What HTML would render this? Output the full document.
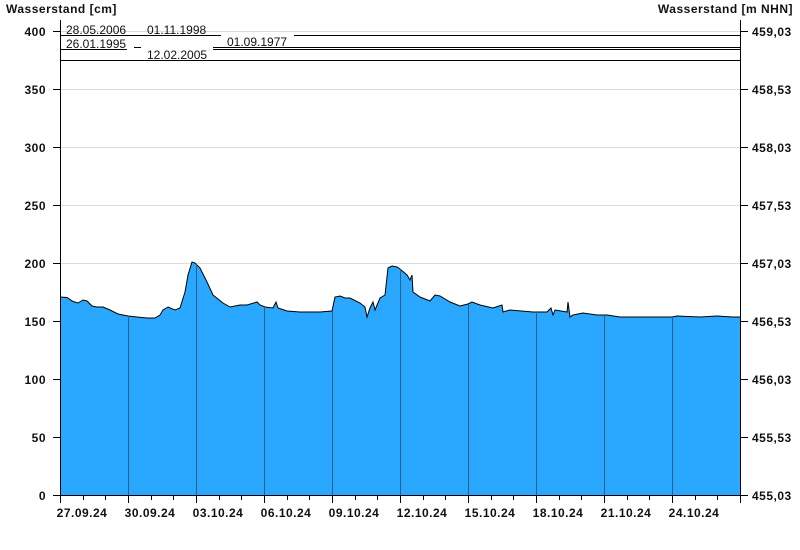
<!DOCTYPE html>
<html><head><meta charset="utf-8"><style>
html,body{margin:0;padding:0;background:#fff;width:800px;height:550px;overflow:hidden}
svg{display:block;font-family:"Liberation Sans",Arial,sans-serif}
.b{font-weight:bold;font-size:12px;fill:#111;letter-spacing:0.5px}
.n{font-size:12px;fill:#111}
</style></head><body>
<svg width="800" height="550" viewBox="0 0 800 550">
<g stroke="#dcdcdc" stroke-width="1">
<line x1="60" y1="437.5" x2="740" y2="437.5"/>
<line x1="60" y1="379.5" x2="740" y2="379.5"/>
<line x1="60" y1="321.5" x2="740" y2="321.5"/>
<line x1="60" y1="263.5" x2="740" y2="263.5"/>
<line x1="60" y1="205.5" x2="740" y2="205.5"/>
<line x1="60" y1="147.5" x2="740" y2="147.5"/>
<line x1="60" y1="89.5" x2="740" y2="89.5"/>
<line x1="60" y1="31.5" x2="740" y2="31.5"/>
</g>
<polygon fill="#2aa8ff" stroke="none" points="60,495 60,297 67,297.5 73,301.5 78,303 83,300 87,301 92,306 97,307 103,307 110,310 118,314 128,316 137,317 147,318 155,318 160,315 163,310 168,307 175,310 180,308 185,292 188,275 192,262 195,263 200,268 207,282 213,295 223,303 230,307 240,305 247,305 257,302 260,305 265,307 273,308 276,302 278,308 287,311 300,312 320,312 332,311 335,297 340,296 345,298 350,298 360,303 365,307 367,317 370,308 373,302 375,310 380,298 385,295 388,268 392,266 397,267 400,269 407,275 410,280 412,275 413,292 420,297 430,301 435,295 440,296 450,302 460,306 468,304 472,302 480,305 493,308 502,305 503,312 510,310 533,312 547,312 551,308 553,315 555,310 567,312 568,302 570,317 573,315 583,313 597,315 607,315 620,317 640,317 672,317 677,316 700,317 717,316 733,317 740,317 740,495"/>
<polyline fill="none" stroke="#000" stroke-width="1" points="60,297 67,297.5 73,301.5 78,303 83,300 87,301 92,306 97,307 103,307 110,310 118,314 128,316 137,317 147,318 155,318 160,315 163,310 168,307 175,310 180,308 185,292 188,275 192,262 195,263 200,268 207,282 213,295 223,303 230,307 240,305 247,305 257,302 260,305 265,307 273,308 276,302 278,308 287,311 300,312 320,312 332,311 335,297 340,296 345,298 350,298 360,303 365,307 367,317 370,308 373,302 375,310 380,298 385,295 388,268 392,266 397,267 400,269 407,275 410,280 412,275 413,292 420,297 430,301 435,295 440,296 450,302 460,306 468,304 472,302 480,305 493,308 502,305 503,312 510,310 533,312 547,312 551,308 553,315 555,310 567,312 568,302 570,317 573,315 583,313 597,315 607,315 620,317 640,317 672,317 677,316 700,317 717,316 733,317 740,317"/>
<g stroke="#2a5f88" stroke-width="1">
<line x1="128.5" y1="316" x2="128.5" y2="495"/>
<line x1="196.5" y1="264" x2="196.5" y2="495"/>
<line x1="264.5" y1="307" x2="264.5" y2="495"/>
<line x1="332.5" y1="311" x2="332.5" y2="495"/>
<line x1="400.5" y1="269" x2="400.5" y2="495"/>
<line x1="468.5" y1="304" x2="468.5" y2="495"/>
<line x1="536.5" y1="312" x2="536.5" y2="495"/>
<line x1="604.5" y1="315" x2="604.5" y2="495"/>
<line x1="672.5" y1="317" x2="672.5" y2="495"/>
</g>
<g stroke="#000" stroke-width="1">
<line x1="60" y1="35.5" x2="221" y2="35.5"/>
<line x1="294" y1="35.5" x2="740" y2="35.5"/>
<line x1="60" y1="49.5" x2="127" y2="49.5"/>
<line x1="134" y1="47.5" x2="141" y2="47.5"/>
<line x1="213" y1="47.5" x2="740" y2="47.5"/>
<line x1="213" y1="49.5" x2="740" y2="49.5"/>
<line x1="60" y1="60.5" x2="740" y2="60.5"/>
<line x1="60.5" y1="20" x2="60.5" y2="496"/>
<line x1="740.5" y1="20" x2="740.5" y2="496"/>
<line x1="60" y1="495.5" x2="741" y2="495.5"/>
</g>
<g stroke="#000" stroke-width="1">
<line x1="53" y1="495.5" x2="60" y2="495.5"/><line x1="53" y1="437.5" x2="60" y2="437.5"/><line x1="53" y1="379.5" x2="60" y2="379.5"/><line x1="53" y1="321.5" x2="60" y2="321.5"/><line x1="53" y1="263.5" x2="60" y2="263.5"/><line x1="53" y1="205.5" x2="60" y2="205.5"/><line x1="53" y1="147.5" x2="60" y2="147.5"/><line x1="53" y1="89.5" x2="60" y2="89.5"/><line x1="53" y1="31.5" x2="60" y2="31.5"/>
<line x1="741" y1="495.5" x2="748" y2="495.5"/><line x1="741" y1="437.5" x2="748" y2="437.5"/><line x1="741" y1="379.5" x2="748" y2="379.5"/><line x1="741" y1="321.5" x2="748" y2="321.5"/><line x1="741" y1="263.5" x2="748" y2="263.5"/><line x1="741" y1="205.5" x2="748" y2="205.5"/><line x1="741" y1="147.5" x2="748" y2="147.5"/><line x1="741" y1="89.5" x2="748" y2="89.5"/><line x1="741" y1="31.5" x2="748" y2="31.5"/>
</g>
<g id="ticks" stroke="#000" stroke-width="1"></g>
<g class="b" text-anchor="end">
<text x="46" y="500">0</text><text x="46" y="442">50</text><text x="46" y="384">100</text><text x="46" y="326">150</text><text x="46" y="268">200</text><text x="46" y="210">250</text><text x="46" y="152">300</text><text x="46" y="94">350</text><text x="46" y="36">400</text>
</g>
<g class="b">
<text x="752" y="500">455,03</text><text x="752" y="442">455,53</text><text x="752" y="384">456,03</text><text x="752" y="326">456,53</text><text x="752" y="268">457,03</text><text x="752" y="210">457,53</text><text x="752" y="152">458,03</text><text x="752" y="94">458,53</text><text x="752" y="36">459,03</text>
<text x="6" y="13">Wasserstand [cm]</text>
<text x="793" y="13" text-anchor="end">Wasserstand [m NHN]</text>
</g>
<g class="b" text-anchor="middle">
<text x="82" y="517">27.09.24</text><text x="150" y="517">30.09.24</text><text x="218" y="517">03.10.24</text><text x="286" y="517">06.10.24</text><text x="354" y="517">09.10.24</text><text x="422" y="517">12.10.24</text><text x="490" y="517">15.10.24</text><text x="558" y="517">18.10.24</text><text x="626" y="517">21.10.24</text><text x="694" y="517">24.10.24</text>
</g>
<g class="n">
<text x="66" y="34">28.05.2006</text>
<text x="147" y="34">01.11.1998</text>
<text x="66" y="48">26.01.1995</text>
<text x="227" y="46">01.09.1977</text>
<text x="147" y="59">12.02.2005</text>
</g>
</svg>
<script>
var g=document.getElementById('ticks'),s='';
for(var i=0;i<=30;i++){var x=Math.round(60+i*680/30)+0.5;var l=(i%3==0)?7:4;s+='<line x1="'+x+'" y1="496" x2="'+x+'" y2="'+(496+l)+'"/>';}
g.innerHTML=s;
</script>
</body></html>
